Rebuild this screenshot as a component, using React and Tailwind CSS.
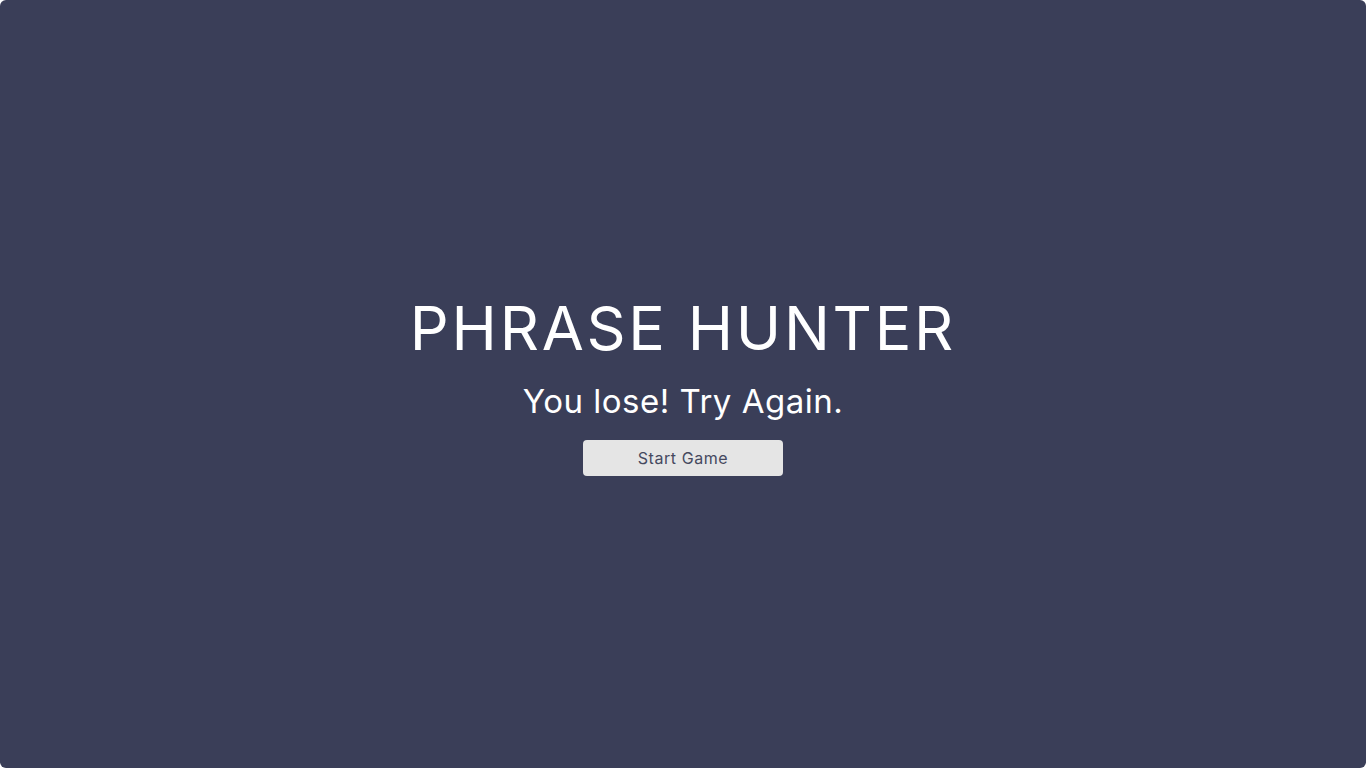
export default function App() {
  return (
    <div className="bg-white min-h-screen">
      <div
        className="h-[768px] w-full rounded-[6px] bg-[#3a3e58] flex flex-col items-center justify-center text-white"
        style={{ fontFamily: 'Inter, "Open Sans", sans-serif' }}
      >
        <h1 className="text-[61px] leading-[72px] font-normal tracking-[0.045em]">PHRASE HUNTER</h1>
        <p className="text-[33px] leading-[40px] mt-[17px] tracking-[0.015em]">You lose! Try Again.</p>
        <button className="mt-[19px] w-[200px] h-[36px] rounded-[4px] bg-[#e5e5e5] text-[#45495f] text-[16px] tracking-[0.035em]">
          Start Game
        </button>
      </div>
    </div>
  );
}
